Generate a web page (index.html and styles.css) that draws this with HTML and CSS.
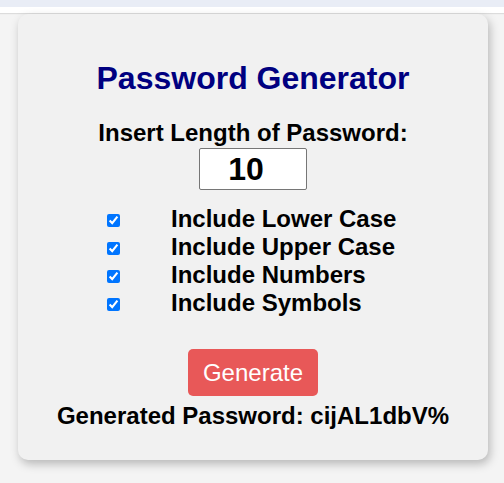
FILE: index.html
```html
<!DOCTYPE html>
<html>
<head>
<meta charset="utf-8">
<link rel="stylesheet" href="styles.css">
</head>
<body>
<div class="topbar"></div>
<div class="page">
  <div class="card">
    <h1 class="title">Password Generator</h1>
    <label class="len-label" for="len">Insert Length of Password:</label>
    <input class="len-input" id="len" type="text" value="10">
    <div class="options">
      <label class="opt"><input type="checkbox" checked><span>Include Lower Case</span></label>
      <label class="opt"><input type="checkbox" checked><span>Include Upper Case</span></label>
      <label class="opt"><input type="checkbox" checked><span>Include Numbers</span></label>
      <label class="opt"><input type="checkbox" checked><span>Include Symbols</span></label>
    </div>
    <button class="gen">Generate</button>
    <div class="result">Generated Password: cijAL1dbV%</div>
  </div>
</div>
</body>
</html>
```
FILE: styles.css
```css
html, body {
  margin: 0;
  padding: 0;
  background: #f4f4f4;
  font-family: "Liberation Sans", Arial, sans-serif;
}
.topbar {
  height: 7px;
  background: #e9edf6;
  border-bottom: 6px solid #ffffff;
  box-shadow: 0 1px 1px #dcdcdc;
}
.page {
  padding: 1px 16px 22px 18px;
}
.card {
  width: 470px;
  height: 446px;
  box-sizing: border-box;
  background: #f1f1f1;
  border-radius: 10px;
  box-shadow: 2px 4px 10px rgba(0,0,0,0.25);
  display: flex;
  flex-direction: column;
  align-items: center;
  padding-top: 46px;
}
.title {
  margin: 0;
  color: #000080;
  font-size: 32px;
  font-weight: bold;
  line-height: 37px;
}
.len-label {
  margin-top: 22px;
  font-size: 24px;
  font-weight: bold;
  line-height: 27px;
  color: #000;
}
.len-input {
  margin-top: 2px;
  width: 108px;
  height: 42px;
  box-sizing: border-box;
  border: 1px solid #767676;
  border-radius: 2px;
  background: #fff;
  font-family: "Liberation Sans", Arial, sans-serif;
  font-size: 32px;
  font-weight: bold;
  text-align: center;
  padding: 0 15px 0 1px;
  color: #000;
}
.options {
  margin-top: 15px;
  align-self: flex-start;
  margin-left: 86px;
  display: flex;
  flex-direction: column;
}
.opt {
  display: flex;
  align-items: center;
  height: 28px;
  font-size: 24px;
  font-weight: bold;
}
.opt input {
  margin: 2px 0 0 3px;
  width: 13px;
  height: 13px;
  accent-color: #0075ff;
}
.opt span {
  margin-left: 51px;
}
.gen {
  margin-top: 32px;
  width: 130px;
  height: 47px;
  border: none;
  border-radius: 5px;
  background: #e85858;
  color: #fff;
  font-family: "Liberation Sans", Arial, sans-serif;
  font-size: 24px;
  padding: 0;
}
.result {
  margin-top: 6px;
  font-size: 24px;
  font-weight: bold;
  line-height: 27px;
}
```
